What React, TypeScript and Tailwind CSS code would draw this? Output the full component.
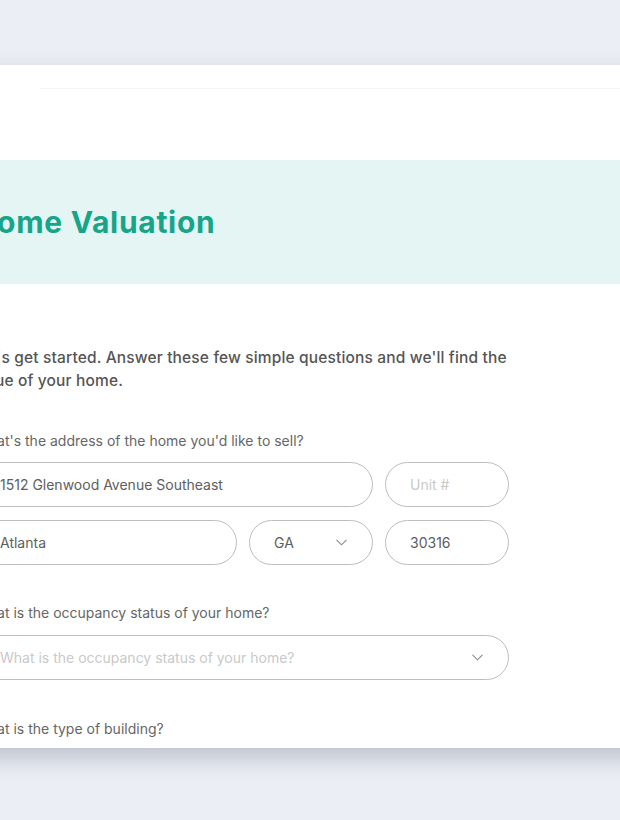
const FONT = { fontFamily: "Inter, 'Noto Sans', sans-serif" };

function Chevron() {
  return (
    <svg width="11" height="7" viewBox="0 0 11 7" fill="none" className="shrink-0">
      <polyline points="0.5,0.8 5.5,5.8 10.5,0.8" stroke="#8a8a8a" strokeWidth="1.1" />
    </svg>
  );
}

function Pill({ text, placeholder, className, select }: { text?: string; placeholder?: string; className: string; select?: boolean }) {
  return (
    <div
      className={`h-[45px] rounded-full border border-[#bdbdbd] flex items-center justify-between pl-[24px] pr-[25px] text-[14px] ${className}`}
    >
      {text ? (
        <span className="text-[#5e5e5e]">{text}</span>
      ) : (
        <span className="text-[#c9c9c9]">{placeholder}</span>
      )}
      {select && <Chevron />}
    </div>
  );
}

export default function App() {
  return (
    <div className="w-[620px] h-[820px] overflow-hidden bg-[#eceef6] pt-[65px]" style={FONT}>
      <div className="ml-[-60px] w-[720px] h-[683px] bg-white shadow-[0_10px_22px_rgba(70,75,100,0.28)]">
        {/* header */}
        <div className="h-[95px] pt-[23px]">
          <div className="ml-[100px] h-px bg-[#f2f5f5]" />
        </div>

        {/* title band */}
        <div className="h-[124px] bg-[#e5f5f3] flex items-center pl-[34px]">
          <h1 className="text-[30px] font-bold text-[#16a589] tracking-[0.7px]">Home Valuation</h1>
        </div>

        {/* form */}
        <div className="pl-[35px] w-[569px] pt-[62px]">
          <p className="w-[560px] text-[15.5px] leading-[23px] font-medium text-[#555] tracking-[0.15px] -ml-[2px]">
            Let's get started. Answer these few simple questions and we'll find the value of your home.
          </p>

          <label className="block mt-[39px] text-[14px] leading-[20px] text-[#666]">
            What's the address of the home you'd like to sell?
          </label>
          <div className="mt-[11px] flex gap-[12px]">
            <Pill text="1512 Glenwood Avenue Southeast" className="flex-1" />
            <Pill placeholder="Unit #" className="w-[124px]" />
          </div>
          <div className="mt-[13px] flex gap-[12px]">
            <Pill text="Atlanta" className="flex-1" />
            <Pill text="GA" className="w-[124px]" select />
            <Pill text="30316" className="w-[124px]" />
          </div>

          <label className="block mt-[38px] text-[14px] leading-[20px] text-[#666]">
            What is the occupancy status of your home?
          </label>
          <div className="mt-[12px]">
            <Pill placeholder="What is the occupancy status of your home?" className="w-full" select />
          </div>

          <label className="block mt-[39px] text-[14px] leading-[20px] text-[#666]">
            What is the type of building?
          </label>
        </div>
      </div>
    </div>
  );
}
